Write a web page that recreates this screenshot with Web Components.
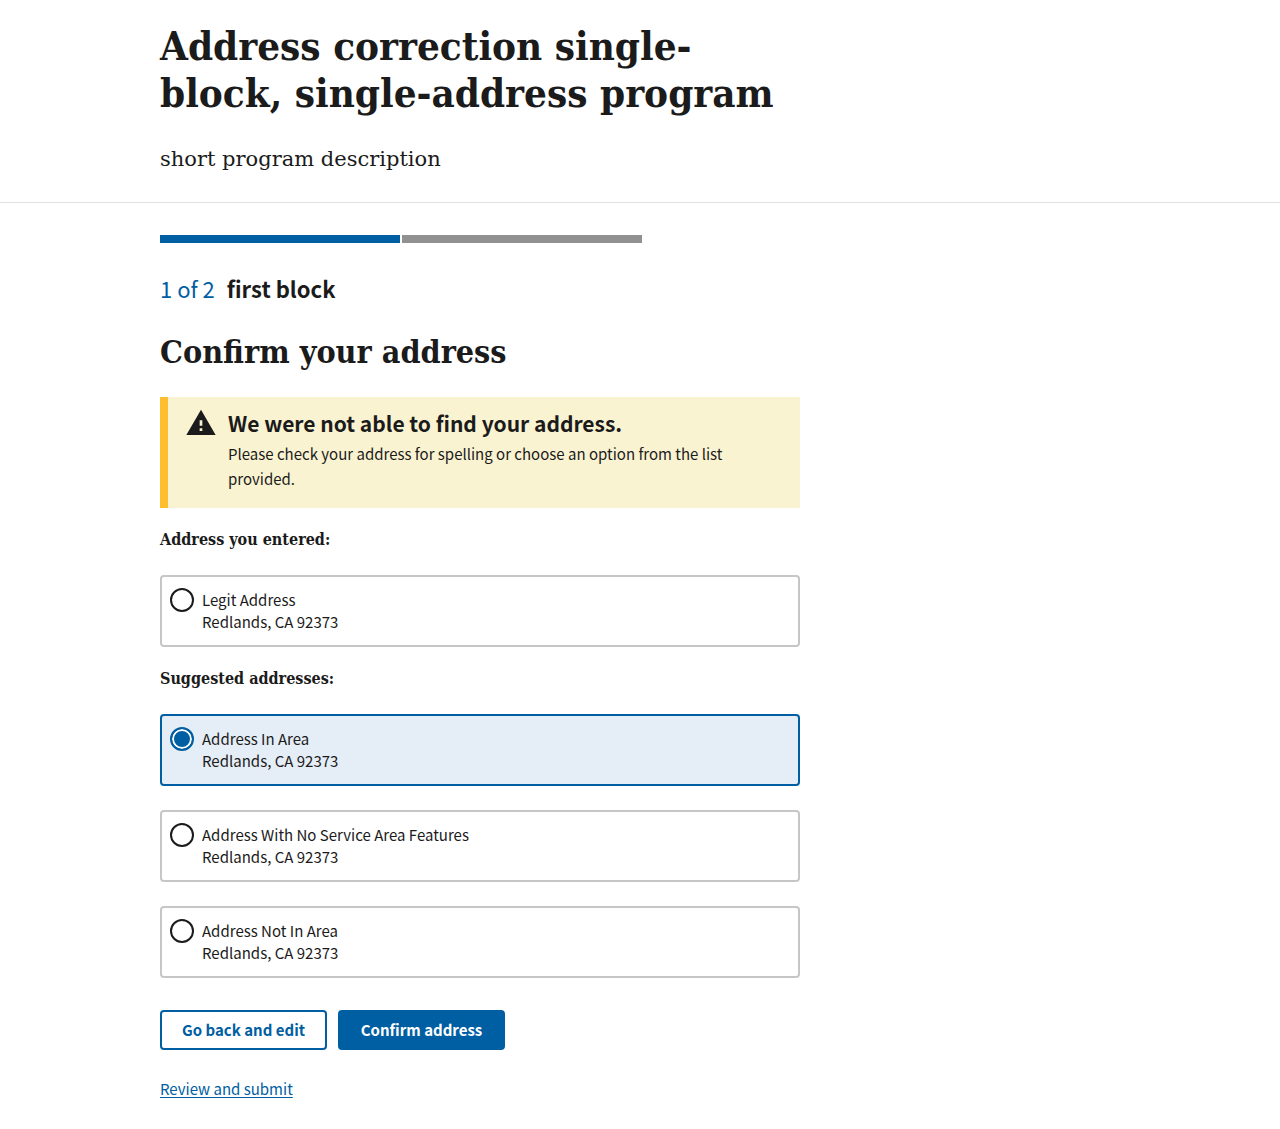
<!DOCTYPE html>
<html lang="en">
<head>
<meta charset="utf-8">
<meta name="viewport" content="width=device-width, initial-scale=1">
<title>Confirm your address</title>
<style>
  :root {
    --sans: "Noto Sans CJK SC", "Noto Sans", sans-serif;
    --serif: "DejaVu Serif Condensed", "DejaVu Serif", serif;
    --ink: #1b1b1b;
    --blue: #005ea2;
    --line: #c6c6c6;
    --pale: #e5edf7;
  }
  body { margin: 0; background: #fff; color: var(--ink); font: 15px/22px var(--sans); }
</style>
</head>
<body>
<application-page></application-page>

<script>
const define = (name, html, setup) => {
  const template = document.createElement('template');
  template.innerHTML = '<style>*{box-sizing:border-box}:host{display:block}</style>' + html;
  customElements.define(name, class extends HTMLElement {
    constructor() {
      super();
      this.attachShadow({ mode: 'open' }).append(template.content.cloneNode(true));
    }
    connectedCallback() { if (setup) setup(this, this.shadowRoot); }
  });
};

define('page-container', `
  <style>
    :host { max-width: 1024px; margin: 0 auto; padding: 0 32px; }
    div { max-width: 640px; }
  </style>
  <div><slot></slot></div>`);

define('program-header', `
  <style>
    header { padding: 22px 0 27px; border-bottom: 1px solid #dfe1e2; }
    h1 { margin: 0 0 27px; font: bold 40px/47px var(--serif); }
    p { margin: 0; font: 21px/32px "DejaVu Serif", serif; }
  </style>
  <header><page-container>
    <h1><slot name="title"></slot></h1>
    <p><slot></slot></p>
  </page-container></header>`);

define('step-progress', `
  <style>
    .bar { display: flex; gap: 2px; }
    .bar span { flex: 0 1 240px; height: 8px; background: #919191; }
    .bar .done { background: var(--blue); }
    h2 { display: flex; gap: 12px; margin: 29px 0 0; font: bold 22px/32px var(--sans); }
    h2 span { color: var(--blue); font-weight: normal; }
  </style>
  <div class="bar"></div>
  <h2><span></span><slot></slot></h2>`, (host, root) => {
    const step = Number(host.getAttribute('step'));
    const total = Number(host.getAttribute('total'));
    root.querySelector('.bar').replaceChildren(...Array.from({ length: total }, (_, i) => {
      const segment = document.createElement('span');
      segment.className = i < step ? 'done' : '';
      return segment;
    }));
    root.querySelector('h2 span').textContent = step + ' of ' + total;
  });

define('warning-alert', `
  <style>
    section { display: flex; gap: 11px; padding: 10px 20px 17px 17px; background: #faf3d1; border-left: 8px solid #ffbe2e; }
    svg { flex: none; width: 32px; height: 32px; fill: var(--ink); }
    h3 { margin: 0 0 2px; font: bold 21px/32px var(--sans); }
    p { margin: 0; line-height: 25px; }
  </style>
  <section>
    <svg viewBox="0 0 24 24" aria-hidden="true"><path d="M1 21h22L12 2 1 21zm12-3h-2v-2h2v2zm0-4h-2v-4h2v4z"/></svg>
    <div><h3><slot name="title"></slot></h3><p><slot></slot></p></div>
  </section>`);

define('address-option', `
  <style>
    label { display: flex; gap: 8px; padding: 12px 8px; border: 2px solid var(--line); border-radius: 4px; cursor: pointer; }
    label:has(:checked) { border-color: var(--blue); background: var(--pale); }
    input { appearance: none; flex: none; width: 24px; height: 24px; margin: -1px 0; border: 2px solid var(--ink); border-radius: 50%; background: #fff; }
    input:checked { border-color: var(--blue); background: var(--blue); box-shadow: inset 0 0 0 2px #fff; }
    span { display: block; }
  </style>
  <label><input type="radio" name="address"><span><slot></slot></span></label>`, (host, root) => {
    const input = root.querySelector('input');
    input.checked = host.hasAttribute('checked');
    input.addEventListener('change', () => host.dispatchEvent(new CustomEvent('pick', { bubbles: true, composed: true })));
    host.clear = () => { input.checked = false; };
  });

define('address-group', `
  <style>
    fieldset { display: block; min-width: 0; margin: 0; padding: 0; border: 0; }
    legend { padding: 0; margin: 0 0 24px; font: bold 16px/22px var(--serif); }
    .options { display: flex; flex-direction: column; gap: 24px; }
  </style>
  <fieldset><legend><slot name="legend"></slot></legend><div class="options"><slot></slot></div></fieldset>`);

define('action-button', `
  <style>
    button { min-width: 167px; height: 40px; padding: 0 18px; border: 2px solid var(--blue); border-radius: 4px; background: #fff; color: var(--blue); font: bold 15px/22px var(--sans); cursor: pointer; }
    :host([primary]) button { background: var(--blue); color: #fff; }
  </style>
  <button type="button"><slot></slot></button>`);

define('address-form', `
  <style>
    h2 { margin: 26px 0 23px; font: bold 32px/44px var(--serif); }
    address-group { margin-top: 21px; }
    .actions { display: flex; flex-wrap: wrap; gap: 11px; margin: 32px 0 28px; }
    a { color: var(--blue); text-underline-offset: 2px; }
  </style>
  <h2>Confirm your address</h2>
  <warning-alert><span slot="title">We were not able to find your address.</span>Please check your address for spelling or choose an option from the list provided.</warning-alert>
  <address-group><span slot="legend">Address you entered:</span>
    <address-option>Legit Address<br>Redlands, CA 92373</address-option>
  </address-group>
  <address-group><span slot="legend">Suggested addresses:</span>
    <address-option checked>Address In Area<br>Redlands, CA 92373</address-option>
    <address-option>Address With No Service Area Features<br>Redlands, CA 92373</address-option>
    <address-option>Address Not In Area<br>Redlands, CA 92373</address-option>
  </address-group>
  <div class="actions">
    <action-button>Go back and edit</action-button>
    <action-button primary>Confirm address</action-button>
  </div>
  <a href="#review">Review and submit</a>`, (host, root) => {
    root.addEventListener('pick', event => {
      root.querySelectorAll('address-option').forEach(option => {
        if (option !== event.target) option.clear();
      });
    });
  });

define('application-page', `
  <style>main { padding: 32px 0 28px; }</style>
  <program-header><span slot="title">Address correction single-block, single-address program</span>short program description</program-header>
  <main><page-container>
    <step-progress step="1" total="2">first block</step-progress>
    <address-form></address-form>
  </page-container></main>`);
</script>
</body>
</html>
